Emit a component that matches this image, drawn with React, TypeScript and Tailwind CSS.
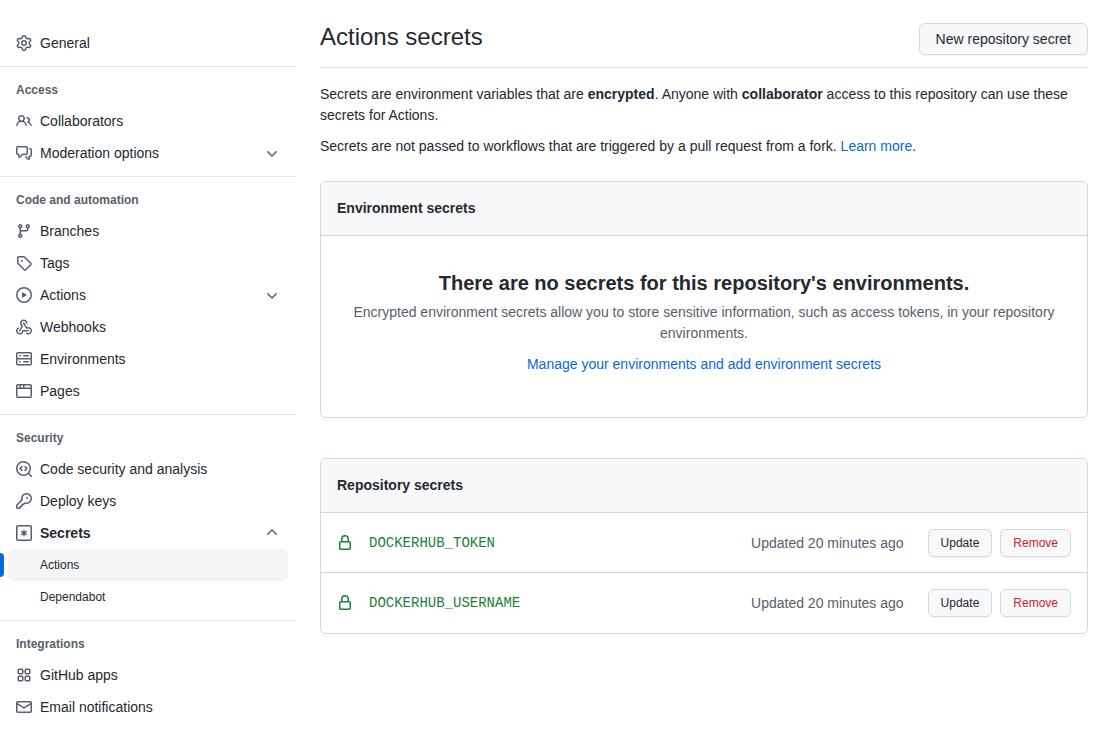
import type { ReactNode } from "react";

const paths = {
  gear: "M7.429 1.525a6.593 6.593 0 011.142 0c.036.003.108.036.137.146l.289 1.105c.147.56.55.967.997 1.189.174.086.341.183.501.29.417.278.97.423 1.53.27l1.102-.303c.11-.03.175.016.195.046.219.31.41.641.573.989.014.031.022.11-.059.19l-.815.806c-.411.406-.562.957-.53 1.456a4.588 4.588 0 010 .582c-.032.499.119 1.05.53 1.456l.815.806c.08.08.073.159.059.19a6.494 6.494 0 01-.573.99c-.02.029-.086.074-.195.045l-1.103-.303c-.559-.153-1.112-.008-1.529.27-.16.107-.327.204-.5.29-.449.222-.851.628-.998 1.189l-.289 1.105c-.029.11-.101.143-.137.146a6.613 6.613 0 01-1.142 0c-.036-.003-.108-.037-.137-.146l-.289-1.105c-.147-.56-.55-.967-.997-1.189a4.502 4.502 0 01-.501-.29c-.417-.278-.97-.423-1.53-.27l-1.102.303c-.11.03-.175-.016-.195-.046a6.492 6.492 0 01-.573-.989c-.014-.031-.022-.11.059-.19l.815-.806c.411-.406.562-.957.53-1.456a4.587 4.587 0 010-.582c.032-.499-.119-1.05-.53-1.456l-.815-.806c-.08-.08-.073-.159-.059-.19a6.44 6.44 0 01.573-.99c.02-.029.086-.075.195-.045l1.103.303c.559.153 1.112.008 1.529-.27.16-.107.327-.204.5-.29.449-.222.851-.628.998-1.189l.289-1.105c.029-.11.101-.143.137-.146zM8 0c-.236 0-.47.01-.701.03-.743.065-1.29.615-1.458 1.261l-.29 1.106c-.017.066-.078.158-.211.224a5.994 5.994 0 00-.668.386c-.123.082-.233.09-.3.071L3.27 2.776c-.644-.177-1.392.02-1.82.63a7.977 7.977 0 00-.704 1.217c-.315.675-.111 1.422.363 1.891l.815.806c.05.048.098.147.088.294a6.084 6.084 0 000 .772c.01.147-.038.246-.088.294l-.815.806c-.474.469-.678 1.216-.363 1.891.2.428.436.835.704 1.218.428.609 1.176.806 1.82.63l1.103-.303c.066-.019.176-.011.299.071.213.143.436.272.668.386.133.066.194.158.212.224l.289 1.106c.169.646.715 1.196 1.458 1.26a8.094 8.094 0 001.402 0c.743-.064 1.29-.614 1.458-1.26l.29-1.106c.017-.066.078-.158.211-.224a5.98 5.98 0 00.668-.386c.123-.082.233-.09.3-.071l1.102.302c.644.177 1.392-.02 1.82-.63.268-.382.505-.789.704-1.217.315-.675.111-1.422-.364-1.891l-.814-.806c-.05-.048-.098-.147-.088-.294a6.1 6.1 0 000-.772c-.01-.147.039-.246.088-.294l.814-.806c.475-.469.679-1.216.364-1.891a7.992 7.992 0 00-.704-1.218c-.428-.609-1.176-.806-1.82-.63l-1.103.303c-.066.019-.176.011-.299-.071a5.991 5.991 0 00-.668-.386c-.133-.066-.194-.158-.212-.224L10.16 1.29C9.99.645 9.444.095 8.701.031A8.094 8.094 0 008 0zm1.5 8a1.5 1.5 0 11-3 0 1.5 1.5 0 013 0zM11 8a3 3 0 11-6 0 3 3 0 016 0z",
  people: "M5.5 3.5a2 2 0 100 4 2 2 0 000-4zM2 5.5a3.5 3.5 0 115.898 2.549 5.507 5.507 0 013.034 4.084.75.75 0 11-1.482.235 4.001 4.001 0 00-7.9 0 .75.75 0 01-1.482-.236A5.507 5.507 0 013.102 8.05 3.49 3.49 0 012 5.5zM11 4a.75.75 0 100 1.5 1.5 1.5 0 01.666 2.844.75.75 0 00-.416.672v.352a.75.75 0 00.574.73c1.2.289 2.162 1.2 2.522 2.372a.75.75 0 101.434-.44 5.01 5.01 0 00-2.56-3.012A3 3 0 0011 4z",
  discussion: "M1.5 2.75a.25.25 0 01.25-.25h8.5a.25.25 0 01.25.25v5.5a.25.25 0 01-.25.25h-3.5a.75.75 0 00-.53.22L3.5 11.44V9.25a.75.75 0 00-.75-.75h-1a.25.25 0 01-.25-.25v-5.5zM1.75 1A1.75 1.75 0 000 2.75v5.5C0 9.216.784 10 1.75 10H2v1.543a1.457 1.457 0 002.487 1.03L7.061 10h3.189A1.75 1.75 0 0012 8.25v-5.5A1.75 1.75 0 0010.25 1h-8.5zM14.5 4.75a.25.25 0 00-.25-.25h-.5a.75.75 0 110-1.5h.5c.966 0 1.75.784 1.75 1.75v5.5A1.75 1.75 0 0114.25 12H14v1.543a1.457 1.457 0 01-2.487 1.03L9.22 12.28a.75.75 0 111.06-1.06l2.22 2.22v-2.19a.75.75 0 01.75-.75h1a.25.25 0 00.25-.25v-5.5z",
  branch: "M11.75 2.5a.75.75 0 100 1.5.75.75 0 000-1.5zm-2.25.75a2.25 2.25 0 113 2.122V6A2.5 2.5 0 0110 8.5H6a1 1 0 00-1 1v1.128a2.251 2.251 0 11-1.5 0V5.372a2.25 2.25 0 111.5 0v1.836A2.492 2.492 0 016 7h4a1 1 0 001-1v-.628A2.25 2.25 0 019.5 3.25zM4.25 12a.75.75 0 100 1.5.75.75 0 000-1.5zM3.5 3.25a.75.75 0 111.5 0 .75.75 0 01-1.5 0z",
  tag: "M2.5 7.775V2.75a.25.25 0 01.25-.25h5.025a.25.25 0 01.177.073l6.25 6.25a.25.25 0 010 .354l-5.025 5.025a.25.25 0 01-.354 0l-6.25-6.25a.25.25 0 01-.073-.177zm-1.5 0V2.75C1 1.784 1.784 1 2.75 1h5.025c.464 0 .91.184 1.238.513l6.25 6.25a1.75 1.75 0 010 2.474l-5.026 5.026a1.75 1.75 0 01-2.474 0l-6.25-6.25A1.75 1.75 0 011 7.775zM6 5a1 1 0 100 2 1 1 0 000-2z",
  play: "M1.5 8a6.5 6.5 0 1113 0 6.5 6.5 0 01-13 0zM8 0a8 8 0 100 16A8 8 0 008 0zM6.379 5.227A.25.25 0 006 5.442v5.117a.25.25 0 00.379.214l4.264-2.559a.25.25 0 000-.428L6.379 5.227z",
  server: "M1.75 1A1.75 1.75 0 000 2.75v4c0 .372.116.717.314 1a1.742 1.742 0 00-.314 1v4c0 .966.784 1.75 1.75 1.75h12.5A1.75 1.75 0 0016 12.75v-4c0-.372-.116-.717-.314-1 .198-.283.314-.628.314-1v-4A1.75 1.75 0 0014.25 1H1.75zm0 7.5a.25.25 0 00-.25.25v4c0 .138.112.25.25.25h12.5a.25.25 0 00.25-.25v-4a.25.25 0 00-.25-.25H1.75zM1.5 2.75a.25.25 0 01.25-.25h12.5a.25.25 0 01.25.25v4a.25.25 0 01-.25.25H1.75a.25.25 0 01-.25-.25v-4zm5.5 2A.75.75 0 017.75 4h4.5a.75.75 0 010 1.5h-4.5A.75.75 0 017 4.75zM7.75 10a.75.75 0 000 1.5h4.5a.75.75 0 000-1.5h-4.5zM3 4.75A.75.75 0 013.75 4h.5a.75.75 0 010 1.5h-.5A.75.75 0 013 4.75zM3.75 10a.75.75 0 000 1.5h.5a.75.75 0 000-1.5h-.5z",
  browser: "M0 2.75C0 1.784.784 1 1.75 1h12.5c.966 0 1.75.784 1.75 1.75v10.5A1.75 1.75 0 0114.25 15H1.75A1.75 1.75 0 010 13.25V2.75zm1.75-.25a.25.25 0 00-.25.25V4.5h2v-2H1.75zM5 2.5v2h2v-2H5zm3.5 0v2h6V2.75a.25.25 0 00-.25-.25H8.5zm6 3.5h-13v7.25c0 .138.112.25.25.25h12.5a.25.25 0 00.25-.25V6z",
  codescan: "M8.47 4.97a.75.75 0 000 1.06L9.94 7.5 8.47 8.97a.75.75 0 101.06 1.06l2-2a.75.75 0 000-1.06l-2-2a.75.75 0 00-1.06 0zM6.53 6.03a.75.75 0 00-1.06-1.06l-2 2a.75.75 0 000 1.06l2 2a.75.75 0 101.06-1.06L5.06 7.5l1.47-1.47zM12.246 13.307a7.5 7.5 0 111.06-1.06l2.474 2.473a.75.75 0 11-1.06 1.06l-2.474-2.473zM1.5 7.5a6 6 0 1110.386 4.094.75.75 0 00-.292.293A6 6 0 011.5 7.5z",
  key: "M6.5 5.5a4 4 0 112.731 3.795.75.75 0 00-.768.18L7.44 10.5H6.25a.75.75 0 00-.75.75v1.19l-.06.06H4.25a.75.75 0 00-.75.75v1.19l-.06.06H1.75a.25.25 0 01-.25-.25v-1.69l5.024-5.023a.75.75 0 00.181-.768A3.995 3.995 0 016.5 5.5zm4-5.5a5.5 5.5 0 00-5.348 6.788L.22 11.72a.75.75 0 00-.22.53v2C0 15.216.784 16 1.75 16h2a.75.75 0 00.53-.22l.5-.5a.75.75 0 00.22-.53V14h.75a.75.75 0 00.53-.22l.5-.5a.75.75 0 00.22-.53V12h.75a.75.75 0 00.53-.22l.932-.932A5.5 5.5 0 1010.5 0zm.5 6a1 1 0 100-2 1 1 0 000 2z",
  mail: "M1.75 2A1.75 1.75 0 000 3.75v.736a.75.75 0 000 .027v7.737C0 13.216.784 14 1.75 14h12.5A1.75 1.75 0 0016 12.25v-8.5A1.75 1.75 0 0014.25 2H1.75zM14.5 4.07v-.32a.25.25 0 00-.25-.25H1.75a.25.25 0 00-.25.25v.32L8 7.88l6.5-3.81zm-13 1.74v6.441c0 .138.112.25.25.25h12.5a.25.25 0 00.25-.25V5.809L8.38 9.397a.75.75 0 01-.76 0L1.5 5.809z",
  lock: "M4 4v2h-.25A1.75 1.75 0 002 7.75v5.5c0 .966.784 1.75 1.75 1.75h8.5A1.75 1.75 0 0014 13.25v-5.5A1.75 1.75 0 0012.25 6H12V4a4 4 0 10-8 0zm6.5 2V4a2.5 2.5 0 10-5 0v2h5zM12 7.5h.25a.25.25 0 01.25.25v5.5a.25.25 0 01-.25.25h-8.5a.25.25 0 01-.25-.25v-5.5a.25.25 0 01.25-.25H12z",
  down: "M12.78 6.22a.75.75 0 010 1.06l-4.25 4.25a.75.75 0 01-1.06 0L3.22 7.28a.75.75 0 011.06-1.06L8 9.94l3.72-3.72a.75.75 0 011.06 0z",
  up: "M3.22 9.78a.75.75 0 010-1.06l4.25-4.25a.75.75 0 011.06 0l4.25 4.25a.75.75 0 01-1.06 1.06L8 6.06 4.28 9.78a.75.75 0 01-1.06 0z",
};

function Glyph({ children }: { children: ReactNode }) {
  return (
    <svg aria-hidden="true" viewBox="0 0 16 16" width="16" height="16" fill="currentColor" className="shrink-0">
      {children}
    </svg>
  );
}

function Icon({ name }: { name: keyof typeof paths }) {
  return (
    <Glyph>
      <path fillRule="evenodd" d={paths[name]} />
    </Glyph>
  );
}

function WebhookIcon() {
  return (
    <Glyph>
      <path d="M5.5 4.25a2.25 2.25 0 014.5 0 .75.75 0 001.5 0 3.75 3.75 0 10-6.14 2.889l-2.272 4.258a.75.75 0 001.324.706L7 7.25a.75.75 0 00-.309-1.015A2.25 2.25 0 015.5 4.25z" />
      <path d="M7.364 3.607a.75.75 0 011.03.257l2.608 4.349a3.75 3.75 0 11-.628 6.785.75.75 0 01.752-1.299 2.25 2.25 0 10-.033-3.88.75.75 0 01-1.03-.256L7.107 4.636a.75.75 0 01.257-1.03z" />
      <path d="M2.9 8.776A.75.75 0 012.625 9.8 2.25 2.25 0 106 11.75a.75.75 0 01.75-.751h5.5a.75.75 0 010 1.5H7.425a3.751 3.751 0 11-5.55-3.998.75.75 0 011.024.274z" />
    </Glyph>
  );
}

function AsteriskIcon() {
  return (
    <Glyph>
      <g fill="none" stroke="currentColor" strokeWidth="1.5">
        <rect x="0.75" y="0.75" width="14.5" height="14.5" rx="1.25" />
        <path strokeLinecap="round" d="M8 5.25v5.5M5.65 6.65l4.7 2.7M10.35 6.65l-4.7 2.7" />
      </g>
    </Glyph>
  );
}

function AppsIcon() {
  return (
    <Glyph>
      <g fill="none" stroke="currentColor" strokeWidth="1.5">
        <rect x="2.25" y="2.25" width="4.5" height="4.5" rx="1" />
        <rect x="9.25" y="2.25" width="4.5" height="4.5" rx="1" />
        <rect x="2.25" y="9.25" width="4.5" height="4.5" rx="1" />
        <rect x="9.25" y="9.25" width="4.5" height="4.5" rx="1" />
      </g>
    </Glyph>
  );
}

function NavLink({ icon, children }: { icon: ReactNode; children: ReactNode }) {
  return (
    <li>
      <a href="#" className="flex h-8 items-center gap-2 rounded-md px-2 hover:bg-[#f3f4f6]">
        <span className="text-[#57606a]">{icon}</span>
        {children}
      </a>
    </li>
  );
}

function NavGroup({ icon, label, open = false, children }: { icon: ReactNode; label: string; open?: boolean; children?: ReactNode }) {
  return (
    <li>
      <button
        type="button"
        aria-expanded={open}
        className={`flex h-8 w-full items-center gap-2 rounded-md px-2 text-left hover:bg-[#f3f4f6] ${open ? "font-bold" : ""}`}
      >
        <span className="text-[#57606a]">{icon}</span>
        <span className="flex-1">{label}</span>
        <span className="text-[#57606a]">
          <Icon name={open ? "up" : "down"} />
        </span>
      </button>
      {children}
    </li>
  );
}

function NavSection({ title, children }: { title: string; children: ReactNode }) {
  return (
    <section className="mt-[7px] border-t border-[#e6e8eb] px-2 pt-2">
      <h2 className="px-2 py-1.5 text-xs leading-[18px] font-bold text-[#57606a]">{title}</h2>
      <ul>{children}</ul>
    </section>
  );
}

function SmallButton({ danger = false, children }: { danger?: boolean; children: ReactNode }) {
  return (
    <button
      type="button"
      className={`h-7 rounded-md border border-[#d5d8da] bg-[#f6f8fa] px-3 text-xs shadow-[0_1px_0_rgba(27,31,36,0.04)] ${danger ? "text-[#cf222e]" : "text-[#24292f]"}`}
    >
      {children}
    </button>
  );
}

function Panel({ title, children }: { title: string; children: ReactNode }) {
  return (
    <section className="overflow-hidden rounded-md border border-[#d0d7de]">
      <h2 className="border-b border-[#d0d7de] bg-[#f6f8fa] p-4 font-bold">{title}</h2>
      {children}
    </section>
  );
}

const secrets = ["DOCKERHUB_TOKEN", "DOCKERHUB_USERNAME"];

export default function App() {
  return (
    <div className="flex min-h-screen gap-6 bg-white pr-3 font-['Liberation_Sans',Arial,sans-serif] text-sm leading-[21px] text-[#24292f]">
      <nav aria-label="Repository settings" className="w-[296px] shrink-0 pt-[27px]">
        <ul className="px-2">
          <NavLink icon={<Icon name="gear" />}>General</NavLink>
        </ul>
        <NavSection title="Access">
          <NavLink icon={<Icon name="people" />}>Collaborators</NavLink>
          <NavGroup icon={<Icon name="discussion" />} label="Moderation options" />
        </NavSection>
        <NavSection title="Code and automation">
          <NavLink icon={<Icon name="branch" />}>Branches</NavLink>
          <NavLink icon={<Icon name="tag" />}>Tags</NavLink>
          <NavGroup icon={<Icon name="play" />} label="Actions" />
          <NavLink icon={<WebhookIcon />}>Webhooks</NavLink>
          <NavLink icon={<Icon name="server" />}>Environments</NavLink>
          <NavLink icon={<Icon name="browser" />}>Pages</NavLink>
        </NavSection>
        <NavSection title="Security">
          <NavLink icon={<Icon name="codescan" />}>Code security and analysis</NavLink>
          <NavLink icon={<Icon name="key" />}>Deploy keys</NavLink>
          <NavGroup icon={<AsteriskIcon />} label="Secrets" open>
            <ul className="text-xs">
              <li className="relative">
                <span className="absolute top-1 -left-2 h-6 w-1 rounded-r-sm bg-[#0969da]" />
                <a href="#" aria-current="page" className="flex h-8 items-center rounded-md bg-[#f3f4f6] pr-2 pl-8">
                  Actions
                </a>
              </li>
              <li>
                <a href="#" className="flex h-8 items-center rounded-md pr-2 pl-8 hover:bg-[#f3f4f6]">
                  Dependabot
                </a>
              </li>
            </ul>
          </NavGroup>
        </NavSection>
        <NavSection title="Integrations">
          <NavLink icon={<AppsIcon />}>GitHub apps</NavLink>
          <NavLink icon={<Icon name="mail" />}>Email notifications</NavLink>
        </NavSection>
      </nav>

      <main className="min-w-0 flex-1 pt-[19px]">
        <header className="flex items-end justify-between border-b border-[#d8dee4] pb-3">
          <h1 className="text-2xl leading-9">Actions secrets</h1>
          <button
            type="button"
            className="h-8 rounded-md border border-[#d5d8da] bg-[#f6f8fa] px-4 shadow-[0_1px_0_rgba(27,31,36,0.04)]"
          >
            New repository secret
          </button>
        </header>

        <p className="mt-4">
          Secrets are environment variables that are <strong>encrypted</strong>. Anyone with <strong>collaborator</strong>{" "}
          access to this repository can use these secrets for Actions.
        </p>
        <p className="mt-2.5 mb-6">
          Secrets are not passed to workflows that are triggered by a pull request from a fork.{" "}
          <a href="#" className="text-[#0969da] hover:underline">Learn more</a>.
        </p>

        <div className="flex flex-col gap-10">
          <Panel title="Environment secrets">
            <div className="px-8 pt-8 pb-[42px] text-center">
              <h3 className="mb-1 text-xl leading-[30px] font-bold">There are no secrets for this repository's environments.</h3>
              <p className="mb-2.5 text-[#57606a]">
                Encrypted environment secrets allow you to store sensitive information, such as access tokens, in your
                repository environments.
              </p>
              <p>
                <a href="#" className="text-[#0969da] hover:underline">Manage your environments and add environment secrets</a>
              </p>
            </div>
          </Panel>

          <Panel title="Repository secrets">
            <ul>
              {secrets.map((name) => (
                <li key={name} className="flex h-15 items-start border-b border-[#d0d7de] px-4 pt-4 last:border-b-0">
                  <div className="flex h-7 flex-1 items-center gap-4 text-[#1a7f37]">
                    <Icon name="lock" />
                    <code className="font-['Liberation_Mono',monospace] text-sm leading-5">{name}</code>
                  </div>
                  <span className="mr-6 flex h-7 items-center text-[#57606a]">Updated 20 minutes ago</span>
                  <div className="flex gap-2">
                    <SmallButton>Update</SmallButton>
                    <SmallButton danger>Remove</SmallButton>
                  </div>
                </li>
              ))}
            </ul>
          </Panel>
        </div>
      </main>
    </div>
  );
}
